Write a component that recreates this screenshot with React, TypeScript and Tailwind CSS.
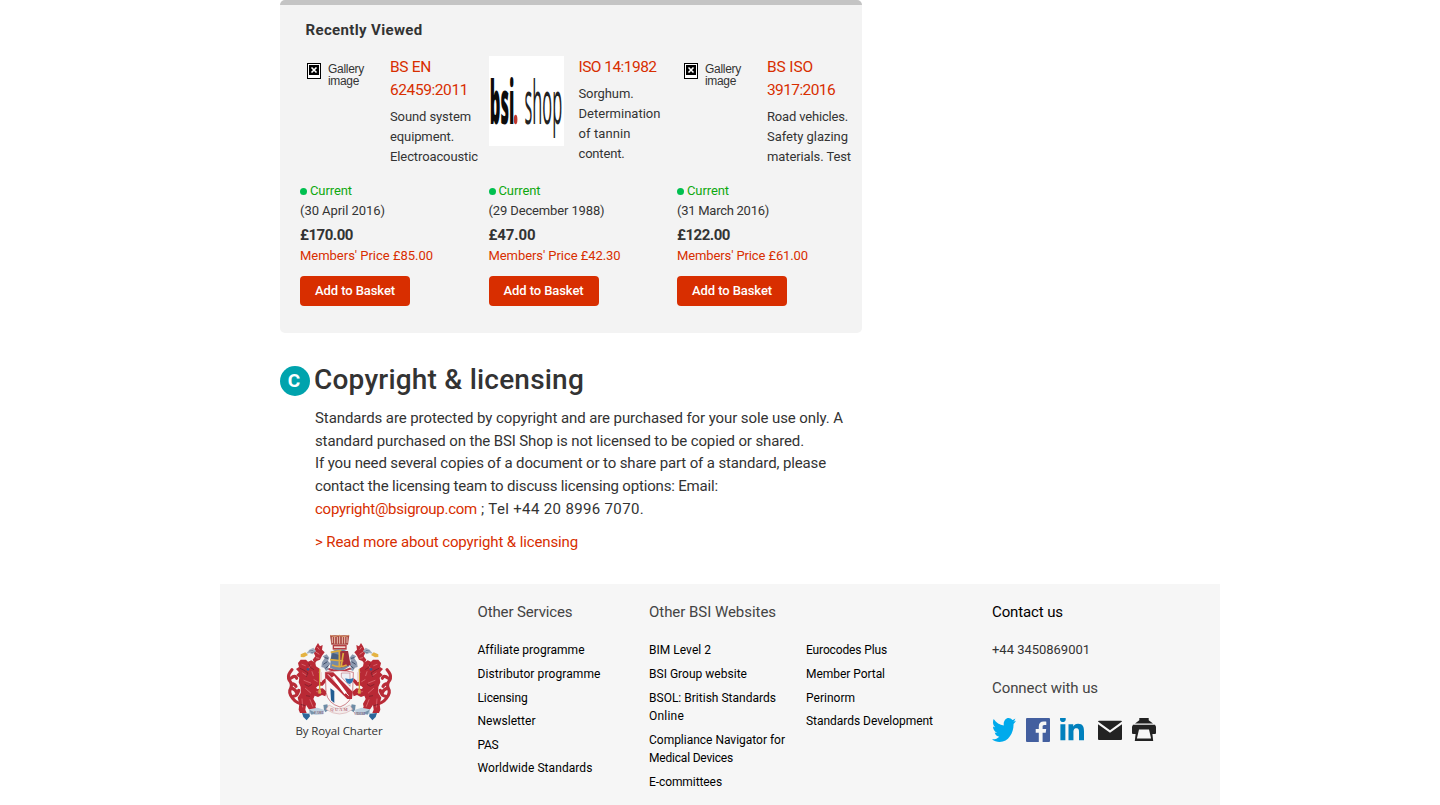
import { useLayoutEffect, useRef, useState } from "react";
import { FaTwitter, FaLinkedinIn } from "react-icons/fa";

/** A single line of text whose letter spacing is computed so that it fills `w` pixels. */
function Line({ children, w, className = "" }: { children: string; w: number; className?: string }) {
  const ref = useRef<HTMLSpanElement>(null);
  const [spacing, setSpacing] = useState(0);
  useLayoutEffect(() => {
    if (ref.current) {
      const natural = ref.current.getBoundingClientRect().width;
      setSpacing((w - natural) / children.length);
    }
  }, [children, w]);
  return (
    <span className={`block whitespace-nowrap ${className}`}>
      <span ref={ref} style={{ letterSpacing: spacing }}>
        {children}
      </span>
    </span>
  );
}

type T = [string, number];

const products: {
  image: "missing" | "logo";
  title: T[];
  desc: T[];
  date: T;
  price: T;
  member: T;
}[] = [
  {
    image: "missing",
    title: [["BS EN", 41], ["62459:2011", 78]],
    desc: [["Sound system", 81], ["equipment.", 64], ["Electroacoustic", 88]],
    date: ["(30 April 2016)", 85],
    price: ["£170.00", 53],
    member: ["Members' Price £85.00", 133],
  },
  {
    image: "logo",
    title: [["ISO 14:1982", 78]],
    desc: [["Sorghum.", 55], ["Determination", 82], ["of tannin", 52], ["content.", 46]],
    date: ["(29 December 1988)", 116],
    price: ["£47.00", 47],
    member: ["Members' Price £42.30", 132],
  },
  {
    image: "missing",
    title: [["BS ISO", 46], ["3917:2016", 68]],
    desc: [["Road vehicles.", 81], ["Safety glazing", 81], ["materials. Test", 84]],
    date: ["(31 March 2016)", 92],
    price: ["£122.00", 53],
    member: ["Members' Price £61.00", 131],
  },
];

function MissingImage() {
  return (
    <div className="flex h-[90px] w-[75px] pl-[7px] pt-[7px]">
      <svg width="14" height="16" viewBox="0 0 14 16" className="shrink-0" shapeRendering="crispEdges">
        <rect width="14" height="16" fill="#000" />
        <rect x="1" y="1" width="12" height="14" fill="#fff" />
        <rect x="2" y="2" width="10" height="10" fill="#000" />
        <path d="M4.5 4.5l5 5M9.5 4.5l-5 5" stroke="#fff" strokeWidth="1.6" shapeRendering="auto" />
      </svg>
      <div className="pl-[7px] font-['Liberation_Sans',sans-serif] text-[12px] leading-[12px] text-[#333]">
        <Line w={36}>Gallery</Line>
        <Line w={31}>image</Line>
      </div>
    </div>
  );
}

function ShopLogo() {
  return (
    <svg width="75" height="90" viewBox="0 0 75 90" className="bg-white">
      <g fontFamily="'Open Sans', sans-serif" fontSize="61">
        <text transform="translate(0.8 67.5) scale(0.29 1)" fontWeight="800" fill="#0c0c0c" textLength="85" lengthAdjust="spacingAndGlyphs">bsi</text>
        <text transform="translate(35.5 67.5) scale(0.29 1)" fontWeight="400" fill="#222" textLength="130" lengthAdjust="spacingAndGlyphs">shop</text>
      </g>
      <ellipse cx="26.6" cy="63.5" rx="1.8" ry="4.8" fill="#c0392f" />
    </svg>
  );
}

/** Left-hand lion supporter; drawn again mirrored for the right-hand one. */
function Lion() {
  return (
    <g>
      <path
        d="M72 238 Q50 236 38 220 Q24 202 32 190 Q38 178 28 166 Q22 154 30 142 L36 134 M32 160 Q46 148 50 160 M32 190 Q46 190 50 204 M40 214 Q54 212 56 196 M34 176 Q44 176 48 184"
        fill="none" stroke="#b92c38" strokeWidth="9.5" strokeLinecap="round" strokeLinejoin="round"
      />
      <path
        d="M54 114 L62 104 L78 104 L84 110 L94 106 L106 114 L108 124 L120 132 L116 142 L123 150 L118 160 L126 168 L136 160 L138 170 L128 182 L114 182 L108 188 L112 192 L128 190 L140 200 L136 214 L126 210 L114 216 L104 212 L100 222 L108 236 L106 246 L116 258 L96 260 L86 252 L78 240 L76 254 L80 264 L60 264 L56 254 L58 236 L53 218 L62 204 L62 186 L56 172 L58 158 L49 150 L57 142 L48 132 L57 126 Z"
        fill="#b92935"
      />
      <path
        d="M66 118 L76 122 M92 122 L84 132 M68 144 L80 152 M96 140 L100 152 M72 166 L92 174 M76 190 L92 204 M90 224 L98 244 M66 222 L68 246 M102 164 L112 170 M110 200 L124 202"
        fill="none" stroke="#dd6f76" strokeWidth="2.4" strokeLinecap="round"
      />
      <path
        d="M60 130 L72 136 L84 144 L78 156 M86 116 L92 128 L102 134 M74 178 L86 184 L96 178 M78 212 L90 214 M62 238 L76 242"
        fill="none" stroke="#751f2b" strokeWidth="3" opacity="0.75"
      />
      <circle cx="84" cy="133" r="4" fill="#38558c" />
      <path d="M119 132v70" stroke="#d4a43b" strokeWidth="4" />
      <path d="M115 194h8v12h-8z" fill="#d8ab4a" />
      <path d="M120 140l6 2v30l-6-2z" fill="#f0d5d2" />
      <path
        d="M104 116 L98 104 L106 94 L100 80 L108 64 L114 54 L120 64 L128 60 L126 74 L134 82 L126 92 L120 104 L110 108 Z"
        fill="#b72a36"
      />
      <path d="M106 80l12 8M112 66l6 8M108 98l10 2" stroke="#e5878b" strokeWidth="2.4" />
      <path d="M78 86 L88 74 L100 68 L108 78 L98 88 L90 84 Z" fill="#a5b3c4" />
      <path d="M88 78l12-2M92 84l12-4" stroke="#4c6384" strokeWidth="2" />
      <path d="M62 88 L76 82 L84 90 L72 97 L62 96 Z" fill="#e4b343" />
      <path
        d="M126 112 L134 100 L128 94 L140 88 L148 98 L144 108 L152 116 L142 126 L150 132 L138 138 L132 128 L124 126 Z"
        fill="#8d9bb0"
      />
      <path d="M130 118l12-8M136 130l10-8M134 98l10 2" stroke="#3c4c68" strokeWidth="3" />
      <path d="M88 253 L112 248 L132 254 L130 268 L108 270 L86 266 Z" fill="#bed0df" />
      <path d="M66 264 L88 266 L90 274 L80 286 L70 276 Z" fill="#2c679a" />
      <path d="M88 254 L108 264 L94 269 Z" fill="#7794ad" />
      <path d="M130 240 L142 238 L146 254 L136 262 L132 254 Z" fill="#6e8ca6" />
    </g>
  );
}

function Crest() {
  return (
    <svg width="120" height="98" viewBox="0 0 360 294" className="block" aria-label="Royal Charter coat of arms">
      <Lion />
      <g transform="translate(357 0) scale(-1 1)">
        <Lion />
      </g>
      <g>
        <path d="M150 31h58l-4 28h-50z" fill="#a94742" />
        <path d="M157 36v18M164 34v22M172 36v20M179 34v22M187 36v20M194 34v22M201 36v18" stroke="#e9c3b4" strokeWidth="3" />
        <path d="M152 31l12 4 14-4 14 4 14-4" fill="none" stroke="#d69a67" strokeWidth="3" />
        <path d="M158 60h42v14h-42z" fill="#b43c42" />
        <path d="M162 64h34v5h-34z" fill="#f2d6d0" />
        <path d="M154 80q24-14 50 0l4 44-28 18-30-14z" fill="#7289a7" />
        <path d="M180 78h24l8 42-30 8z" fill="#a02d3c" />
        <path d="M158 84l20 6 2 16-28-4z" fill="#4a5f80" />
        <path d="M152 82l32-6M150 104l40 4M156 120q24 10 44 0M178 78v48M190 84l-6 38" fill="none" stroke="#ddac3f" strokeWidth="5" />
        <path d="M146 132q34 14 66-2" fill="none" stroke="#ba3742" strokeWidth="6" />
      </g>
      <path d="M136 142q44-10 84 0l-2 58q-4 34-38 46-36-10-42-44z" fill="#fbf7f7" stroke="#b64550" strokeWidth="2" />
      <path d="M136 142l24 0 58 58-2 22-14 0-66-64z" fill="#b92b38" />
      <path d="M144 148l62 64" stroke="#f6e7e8" strokeWidth="3" />
      <path d="M184 144v12l26 28v-40z" fill="#edf0f4" stroke="#b55462" strokeWidth="1.5" />
      <path d="M196 160q12 5 24-1 0 15-12 18-11-3-12-17z" fill="#2e73b0" />
      <path d="M151 190l12 8v36l-10-8z" fill="#245c92" />
      <path d="M159 155l38 50" stroke="#fff" strokeWidth="8" />
      <path d="M147 240q31 22 62 0l9 13q-39 28-80 0z" fill="#f3ebeb" stroke="#cf9b9d" strokeWidth="1.5" />
      <g fontFamily="'Liberation Serif', serif" fontWeight="700" fill="#b87080">
        <text x="151" y="259" fontSize="13" textLength="52">QUAM</text>
        <text x="103" y="268" fontSize="10" textLength="29" fill="#80617a">FAME</text>
        <text x="222" y="270" fontSize="10" textLength="33" fill="#80617a">VIDERI</text>
      </g>
    </svg>
  );
}

const services: T[] = [
  ["Affiliate programme", 106],
  ["Distributor programme", 123],
  ["Licensing", 50],
  ["Newsletter", 58],
  ["PAS", 21],
  ["Worldwide Standards", 115],
];
const websites: T[][] = [
  [["BIM Level 2", 62]],
  [["BSI Group website", 98]],
  [["BSOL: British Standards", 127], ["Online", 35]],
  [["Compliance Navigator for", 136], ["Medical Devices", 84]],
  [["E-committees", 73]],
];
const more: T[] = [
  ["Eurocodes Plus", 81],
  ["Member Portal", 79],
  ["Perinorm", 49],
  ["Standards Development", 127],
];

export default function App() {
  return (
    <div className="h-[805px] overflow-hidden bg-white font-[Roboto,sans-serif] text-[#333]">
      <main className="mx-auto h-[584px] w-[1000px] pl-[60px]">
        <section className="h-[333px] w-[582px] rounded-[5px] border-t-[5px] border-[#c4c4c4] bg-[#f3f3f3] px-5">
          <h2 className="h-[51px] pl-[5.5px] pt-[13px] text-[15px] font-bold leading-6">
            <Line w={117}>Recently Viewed</Line>
          </h2>
          <div className="grid grid-cols-[188.5px_188.5px_188.5px]">
            {products.map((p) => (
              <article key={p.date[0]} className="text-[13px] leading-5">
                <div className="flex h-[125px] gap-[15px]">
                  {p.image === "missing" ? <MissingImage /> : <ShopLogo />}
                  <div>
                    <h3 className="mb-[5px] text-[15.5px] font-normal leading-[23px] text-[#d82e00]">
                      {p.title.map(([t, w]) => <Line key={t} w={w}>{t}</Line>)}
                    </h3>
                    {p.desc.map(([t, w]) => <Line key={t} w={w}>{t}</Line>)}
                  </div>
                </div>
                <div className="flex items-center gap-[3px] text-[#0fa80f]">
                  <span className="size-[7px] rounded-full bg-[#00c050]" />
                  <Line w={42}>Current</Line>
                </div>
                <Line w={p.date[1]}>{p.date[0]}</Line>
                <Line w={p.price[1]} className="pt-[3px] text-[15px] font-bold leading-[22px]">{p.price[0]}</Line>
                <Line w={p.member[1]} className="text-[#d82e00]">{p.member[0]}</Line>
                <button className="mt-[10px] flex h-[30px] w-[110px] items-center justify-center rounded-[4px] bg-[#d82e00] text-[13px] font-medium text-white">
                  <Line w={80}>Add to Basket</Line>
                </button>
              </article>
            ))}
          </div>
        </section>

        <section className="pt-[33px]">
          <h1 className="flex h-[30px] items-center gap-1 text-[28px] font-medium leading-[30px]">
            <span className="flex size-[30px] items-center justify-center rounded-full bg-[#00a3ad] pr-[2px] text-[19px] font-bold text-white">C</span>
            <Line w={270} className="-mt-[2px]">Copyright & licensing</Line>
          </h1>
          <div className="pl-[35px] pt-[10.9px] text-[15px] leading-[22.75px]">
            <Line w={528}>Standards are protected by copyright and are purchased for your sole use only. A</Line>
            <Line w={489}>standard purchased on the BSI Shop is not licensed to be copied or shared.</Line>
            <Line w={511}>If you need several copies of a document or to share part of a standard, please</Line>
            <Line w={403}>contact the licensing team to discuss licensing options: Email:</Line>
            <div className="flex gap-1">
              <Line w={162} className="text-[#d82e00]">copyright@bsigroup.com</Line>
              <Line w={163}>; Tel +44 20 8996 7070.</Line>
            </div>
            <Line w={263} className="pt-[10px] text-[#d82e00]">{"> Read more about copyright & licensing"}</Line>
          </div>
        </section>
      </main>

      <footer className="mx-auto flex h-[221px] w-[1000px] bg-[#f6f6f6] pt-4 text-[12px] leading-[18px] text-black">
        <div className="w-[257.5px] pl-[60px] pt-[25px]">
          <Crest />
          <Line w={87} className="pl-[15.5px] font-['Open_Sans',sans-serif] text-[11.5px] leading-4 text-[#333]">By Royal Charter</Line>
        </div>
        <div className="w-[171.5px]">
          <h4 className="mb-[17.4px] text-[15px] leading-6 text-[#444]"><Line w={95}>Other Services</Line></h4>
          <div className="flex flex-col gap-[5.6px]">
            {services.map(([t, w]) => <Line key={t} w={w}>{t}</Line>)}
          </div>
        </div>
        <div className="w-[157px]">
          <h4 className="mb-[17px] text-[15px] leading-6 text-[#444]"><Line w={127}>Other BSI Websites</Line></h4>
          <div className="flex flex-col gap-[6px]">
            {websites.map((g) => (
              <div key={g[0][0]}>
                {g.map(([t, w]) => <Line key={t} w={w}>{t}</Line>)}
              </div>
            ))}
          </div>
        </div>
        <div className="w-[186px] pt-[41.4px]">
          <div className="flex flex-col gap-[5.6px]">
            {more.map(([t, w]) => <Line key={t} w={w}>{t}</Line>)}
          </div>
        </div>
        <div>
          <h4 className="mb-[17px] text-[15px] leading-6"><Line w={71}>Contact us</Line></h4>
          <Line w={98} className="text-[13px] text-[#333]">+44 3450869001</Line>
          <h4 className="pt-[17px] text-[15px] leading-6 text-[#444]"><Line w={106}>Connect with us</Line></h4>
          <div className="flex h-6 items-start pt-[18px]">
            <FaTwitter viewBox="0 48 512 416" preserveAspectRatio="none" className="mr-[10px] h-6 w-6 shrink-0 text-[#00aaec]" />
            <svg width="24" height="24" viewBox="0 0 24 24" fill="#435f9f" className="mr-[10px] shrink-0">
              <path d="M23 0H1a1 1 0 0 0-1 1v22a1 1 0 0 0 1 1h11.8v-9.3H9.7v-3.6h3.1V8.4c0-3.1 1.9-4.8 4.7-4.8 1.3 0 2.4.1 2.8.1V7h-1.9c-1.5 0-1.8.7-1.8 1.8v2.3h3.6l-.5 3.6h-3.1V24H23a1 1 0 0 0 1-1V1a1 1 0 0 0-1-1z" />
            </svg>
            <FaLinkedinIn viewBox="0 32 448 448" preserveAspectRatio="none" className="mr-[14px] h-6 w-6 shrink-0 text-[#0080bd]" />
            <svg width="24" height="24" viewBox="0 0 24 24" fill="#222" className="mr-[10px] shrink-0">
              <path d="M1 2.7h22a1 1 0 0 1 1 .9L12 12.3 0 3.6a1 1 0 0 1 1-.9z" />
              <path d="M0 6.2l12 8.6 12-8.6V21a1 1 0 0 1-1 1H1a1 1 0 0 1-1-1z" />
            </svg>
            <svg width="24" height="24" viewBox="0 0 24 24" fill="#222" className="shrink-0">
              <path d="M7.3 0h9.4v2.3l4.3 3.3H3l4.3-3.3z" />
              <path fillRule="evenodd" d="M1 6.7h22l1 2V15a1 1 0 0 1-1 1h-2.6l.8 7H2.8l.8-7H1a1 1 0 0 1-1-1V8.7zM7 11.5L4.9 20.5h14.2L17 11.5z" />
            </svg>
          </div>
        </div>
      </footer>
    </div>
  );
}
